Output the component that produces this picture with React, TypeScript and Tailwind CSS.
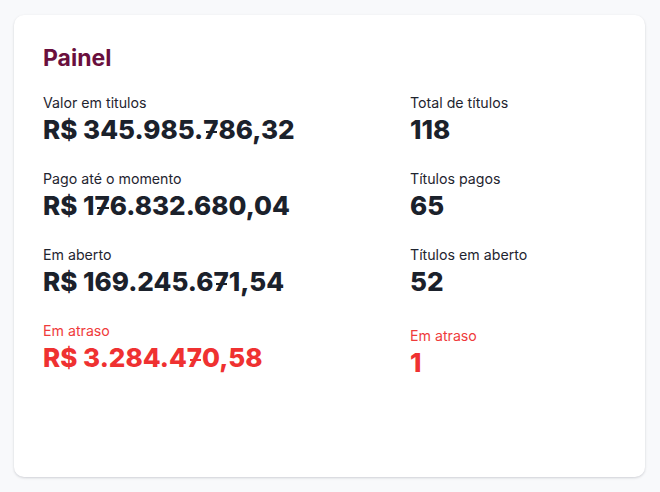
import React from "react";

const font = { fontFamily: "Inter, 'Noto Sans', sans-serif" };

function Num({ text }: { text: string }) {
  return (
    <>
      {text.split("").map((ch, i) =>
        ch === "7" ? (
          <span key={i} className="relative inline-block">
            7
            <span className="absolute left-[18%] right-[8%] top-[52%] h-[2.5px] bg-current" />
          </span>
        ) : (
          <React.Fragment key={i}>{ch}</React.Fragment>
        )
      )}
    </>
  );
}

function Stat({
  label,
  value,
  red,
  className = "",
}: {
  label: string;
  value: string;
  red?: boolean;
  className?: string;
}) {
  return (
    <div className={"flex flex-col " + className}>
      <span
        className={
          "text-[14.2px] leading-[20px] " + (red ? "text-[#ef3b3b]" : "text-[#1f2530]")
        }
      >
        {label}
      </span>
      <span
        className={
          "text-[26px] leading-[34px] font-extrabold tracking-[0px] " +
          (red ? "text-[#ef3131]" : "text-[#1b212b]")
        }
      >
        <Num text={value} />
      </span>
    </div>
  );
}

export default function App() {
  return (
    <div className="w-[660px] h-[492px] bg-[#f8f9fb] pt-[15px] pl-[14px]" style={font}>
      <div className="w-[631px] h-[462px] bg-white rounded-[10px] shadow-[0_1px_3px_rgba(16,24,40,0.12),0_1px_2px_rgba(16,24,40,0.06)] px-[29px] pt-[27px]">
        <h1 className="text-[23px] leading-[32px] font-bold text-[#6a0f3d]">Painel</h1>
        <div className="grid grid-cols-[367px_1fr] mt-[19px]">
          <div className="flex flex-col gap-[22px]">
            <Stat label="Valor em titulos" value="R$ 345.985.786,32" />
            <Stat label="Pago até o momento" value="R$ 176.832.680,04" />
            <Stat label="Em aberto" value="R$ 169.245.671,54" />
            <Stat label="Em atraso" value="R$ 3.284.470,58" red />
          </div>
          <div className="flex flex-col gap-[22px]">
            <Stat label="Total de títulos" value="118" />
            <Stat label="Títulos pagos" value="65" />
            <Stat label="Títulos em aberto" value="52" />
            <Stat label="Em atraso" value="1" red className="mt-[5px]" />
          </div>
        </div>
      </div>
    </div>
  );
}
